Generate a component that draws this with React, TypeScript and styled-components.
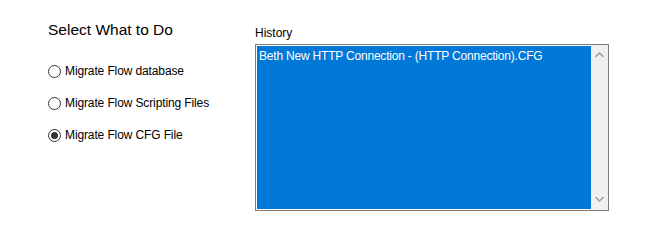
import React, { useState } from "react";
import styled, { createGlobalStyle } from "styled-components";

const GlobalStyle = createGlobalStyle`
  body {
    margin: 0;
    background: #ffffff;
    font-family: "Liberation Sans", Arial, sans-serif;
  }
`;

const options = [
  "Migrate Flow database",
  "Migrate Flow Scripting Files",
  "Migrate Flow CFG File",
];

const App: React.FC = () => {
  const [selected, setSelected] = useState(2);

  return (
    <>
      <GlobalStyle />
      <Page>
        <Choices>
          <Title>Select What to Do</Title>
          <RadioList>
            {options.map((label, i) => (
              <RadioRow key={label} onClick={() => setSelected(i)}>
                <RadioCircle checked={selected === i} />
                <RadioText>{label}</RadioText>
              </RadioRow>
            ))}
          </RadioList>
        </Choices>

        <HistoryPanel>
          <HistoryLabel>History</HistoryLabel>
          <ListBox>
            <ListContent>
              <ListItem>Beth New HTTP Connection - (HTTP Connection).CFG</ListItem>
            </ListContent>
            <ScrollBar>
              <Arrow viewBox="0 0 9 6">
                <path d="M0.5 5 L4.5 1 L8.5 5" />
              </Arrow>
              <Arrow viewBox="0 0 9 6">
                <path d="M0.5 1 L4.5 5 L8.5 1" />
              </Arrow>
            </ScrollBar>
          </ListBox>
        </HistoryPanel>
      </Page>
    </>
  );
};

const Page = styled.div`
  display: flex;
  width: 648px;
  height: 245px;
  padding: 0 0 0 48px;
  box-sizing: border-box;
  color: #000000;
`;

const Choices = styled.div`
  width: 207px;
  display: flex;
  flex-direction: column;
`;

const Title = styled.div`
  margin-top: 20px;
  font-size: 15.5px;
  line-height: 20px;
  color: #000000;
`;

const RadioList = styled.div`
  margin-top: 23px;
  display: flex;
  flex-direction: column;
  gap: 16px;
`;

const RadioRow = styled.label`
  display: flex;
  align-items: center;
  gap: 4px;
  height: 16px;
  font-size: 12px;
  cursor: pointer;
`;

const RadioCircle = styled.span<{ checked: boolean }>`
  width: 11px;
  height: 11px;
  border: 1px solid #333333;
  border-radius: 50%;
  background: #ffffff;
  display: flex;
  align-items: center;
  justify-content: center;
  flex-shrink: 0;

  &::after {
    content: "";
    display: ${(p) => (p.checked ? "block" : "none")};
    width: 7px;
    height: 7px;
    border-radius: 50%;
    background: #333333;
  }
`;

const RadioText = styled.span`
  font-size: 12px;
  line-height: 16px;
  letter-spacing: -0.12px;
`;

const HistoryPanel = styled.div`
  display: flex;
  flex-direction: column;
`;

const HistoryLabel = styled.div`
  margin-top: 25px;
  height: 19px;
  font-size: 12px;
  line-height: 16px;
`;

const ListBox = styled.div`
  width: 354px;
  height: 167px;
  box-sizing: border-box;
  border: 1px solid #7a7a7a;
  padding: 1px 0 1px 1px;
  display: flex;
  background: #ffffff;
`;

const ListContent = styled.div`
  flex: 1;
  background: #0078d7;
  padding: 2px 0 0 2px;
`;

const ListItem = styled.div`
  color: #ffffff;
  font-size: 12px;
  line-height: 16px;
  letter-spacing: -0.2px;
  white-space: nowrap;
`;

const ScrollBar = styled.div`
  width: 17px;
  background: #f0f0f0;
  display: flex;
  flex-direction: column;
  justify-content: space-between;
  align-items: center;
  padding: 7px 0 8px;
  margin-top: -1px;
  margin-bottom: -1px;
`;

const Arrow = styled.svg`
  width: 9px;
  height: 6px;
  fill: none;
  stroke: #a3a3a3;
  stroke-width: 1.6;
`;

export default App;
